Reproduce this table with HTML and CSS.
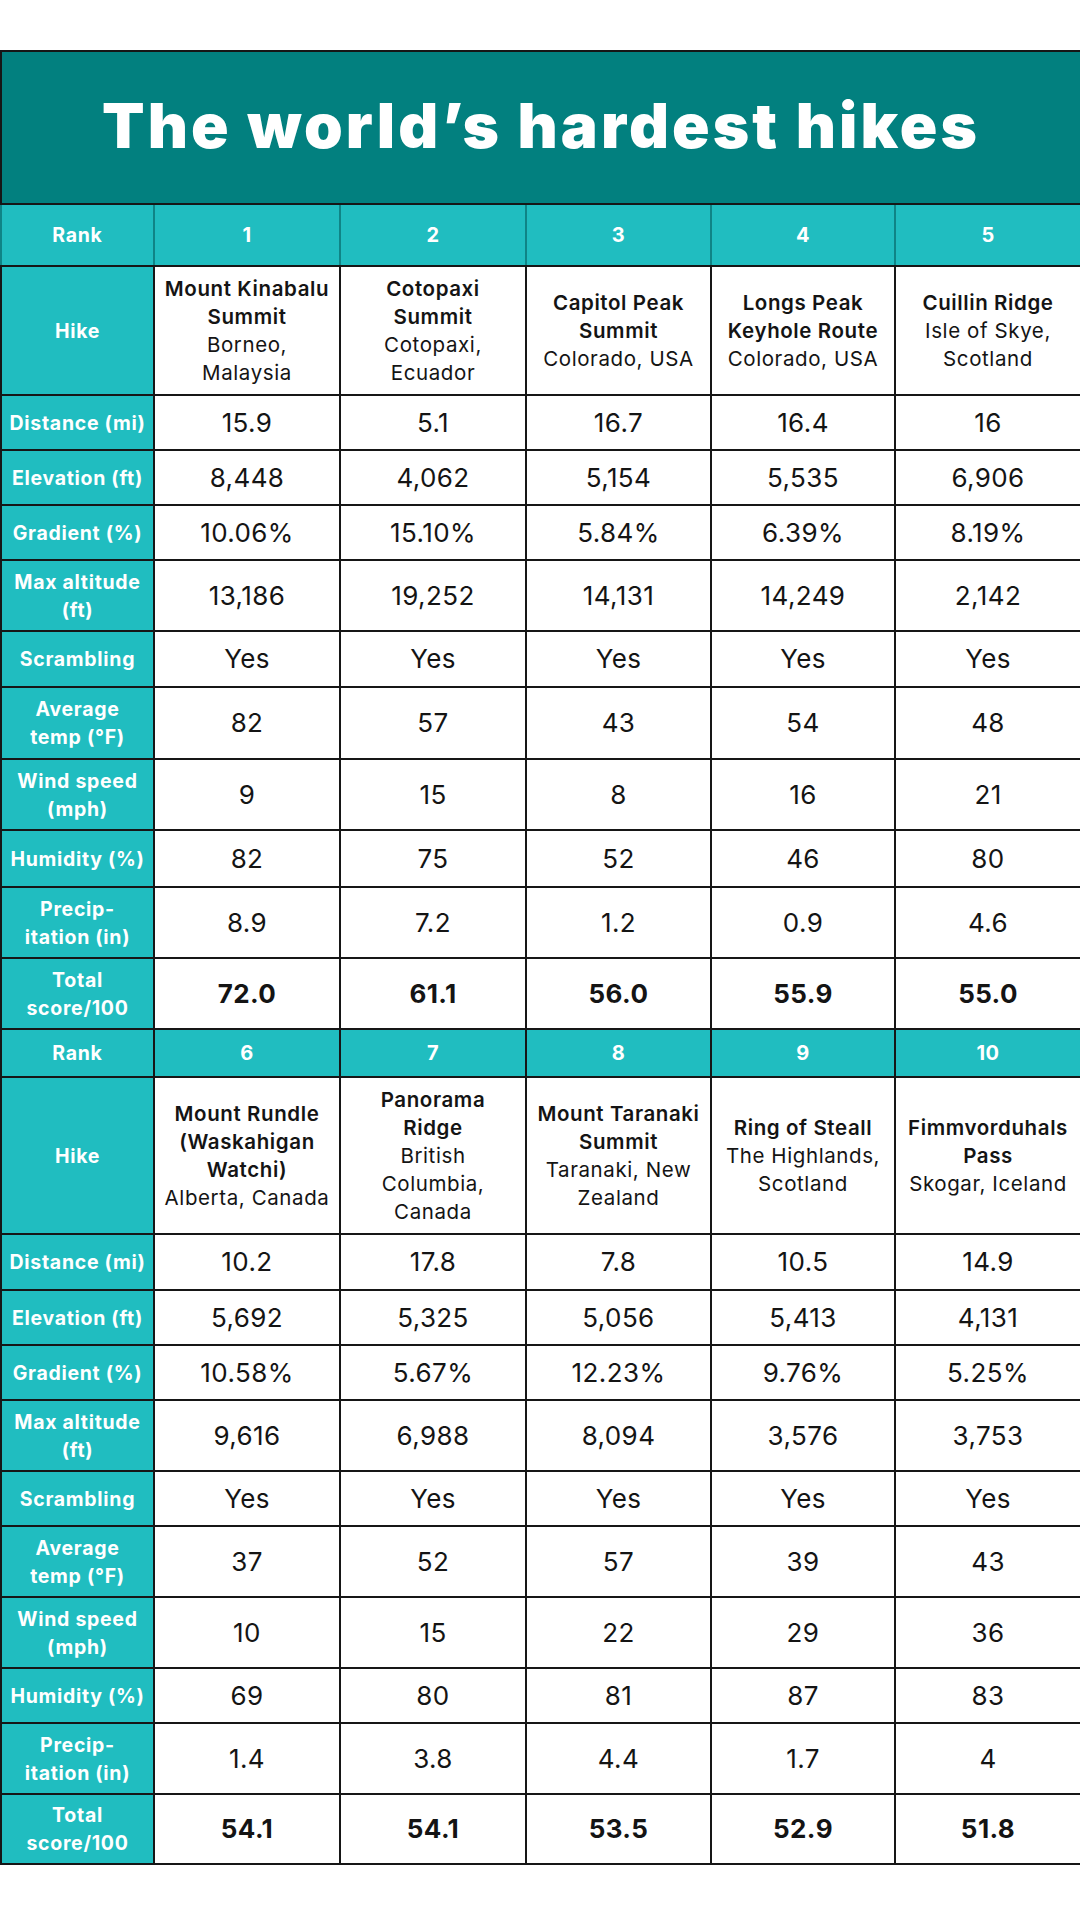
FILE: index.html
```html
<!DOCTYPE html>
<html lang="en">
<head>
<meta charset="utf-8">
<title>The world’s hardest hikes</title>
<link rel="stylesheet" href="styles.css">
</head>
<body>
<table class="hikes">
  <colgroup>
    <col class="c-label"><col class="c-a"><col class="c-a"><col class="c-b"><col class="c-c"><col class="c-d">
  </colgroup>
  <tr class="r-title"><th colspan="6" class="title">The world’s hardest hikes</th></tr>

  <tr class="r-rank1 rank rank-top"><th>Rank</th><td>1</td><td>2</td><td>3</td><td>4</td><td>5</td></tr>
  <tr class="r-hike1 hike"><th>Hike</th>
    <td><b>Mount Kinabalu<br>Summit</b><br>Borneo,<br>Malaysia</td>
    <td><b>Cotopaxi<br>Summit</b><br>Cotopaxi,<br>Ecuador</td>
    <td><b>Capitol Peak<br>Summit</b><br>Colorado, USA</td>
    <td><b>Longs Peak<br>Keyhole Route</b><br>Colorado, USA</td>
    <td><b>Cuillin Ridge</b><br>Isle of Skye,<br>Scotland</td>
  </tr>
  <tr class="s"><th>Distance (mi)</th><td>15.9</td><td>5.1</td><td>16.7</td><td>16.4</td><td>16</td></tr>
  <tr class="s"><th>Elevation (ft)</th><td>8,448</td><td>4,062</td><td>5,154</td><td>5,535</td><td>6,906</td></tr>
  <tr class="s"><th>Gradient (%)</th><td>10.06%</td><td>15.10%</td><td>5.84%</td><td>6.39%</td><td>8.19%</td></tr>
  <tr class="d"><th>Max altitude<br>(ft)</th><td>13,186</td><td>19,252</td><td>14,131</td><td>14,249</td><td>2,142</td></tr>
  <tr class="s56"><th>Scrambling</th><td>Yes</td><td>Yes</td><td>Yes</td><td>Yes</td><td>Yes</td></tr>
  <tr class="d72"><th>Average<br>temp (°F)</th><td>82</td><td>57</td><td>43</td><td>54</td><td>48</td></tr>
  <tr class="d"><th>Wind speed<br>(mph)</th><td>9</td><td>15</td><td>8</td><td>16</td><td>21</td></tr>
  <tr class="s57"><th>Humidity (%)</th><td>82</td><td>75</td><td>52</td><td>46</td><td>80</td></tr>
  <tr class="d"><th>Precip-<br>itation (in)</th><td>8.9</td><td>7.2</td><td>1.2</td><td>0.9</td><td>4.6</td></tr>
  <tr class="d total"><th>Total<br>score/100</th><td>72.0</td><td>61.1</td><td>56.0</td><td>55.9</td><td>55.0</td></tr>

  <tr class="r-rank2 rank"><th>Rank</th><td>6</td><td>7</td><td>8</td><td>9</td><td>10</td></tr>
  <tr class="r-hike2 hike"><th>Hike</th>
    <td><b>Mount Rundle<br>(Waskahigan<br>Watchi)</b><br>Alberta, Canada</td>
    <td><b>Panorama<br>Ridge</b><br>British<br>Columbia,<br>Canada</td>
    <td><b>Mount Taranaki<br>Summit</b><br>Taranaki, New<br>Zealand</td>
    <td><b>Ring of Steall</b><br>The Highlands,<br>Scotland</td>
    <td><b>Fimmvorduhals<br>Pass</b><br>Skogar, Iceland</td>
  </tr>
  <tr class="s56"><th>Distance (mi)</th><td>10.2</td><td>17.8</td><td>7.8</td><td>10.5</td><td>14.9</td></tr>
  <tr class="s"><th>Elevation (ft)</th><td>5,692</td><td>5,325</td><td>5,056</td><td>5,413</td><td>4,131</td></tr>
  <tr class="s"><th>Gradient (%)</th><td>10.58%</td><td>5.67%</td><td>12.23%</td><td>9.76%</td><td>5.25%</td></tr>
  <tr class="d"><th>Max altitude<br>(ft)</th><td>9,616</td><td>6,988</td><td>8,094</td><td>3,576</td><td>3,753</td></tr>
  <tr class="s"><th>Scrambling</th><td>Yes</td><td>Yes</td><td>Yes</td><td>Yes</td><td>Yes</td></tr>
  <tr class="d"><th>Average<br>temp (°F)</th><td>37</td><td>52</td><td>57</td><td>39</td><td>43</td></tr>
  <tr class="d"><th>Wind speed<br>(mph)</th><td>10</td><td>15</td><td>22</td><td>29</td><td>36</td></tr>
  <tr class="s"><th>Humidity (%)</th><td>69</td><td>80</td><td>81</td><td>87</td><td>83</td></tr>
  <tr class="d"><th>Precip-<br>itation (in)</th><td>1.4</td><td>3.8</td><td>4.4</td><td>1.7</td><td>4</td></tr>
  <tr class="d70 total"><th>Total<br>score/100</th><td>54.1</td><td>54.1</td><td>53.5</td><td>52.9</td><td>51.8</td></tr>
</table>
</body>
</html>
```

FILE: styles.css
```css
html, body {
  margin: 0;
  padding: 0;
  background: #ffffff;
}

body {
  padding-top: 50px;
  font-family: Inter, "Open Sans", "Liberation Sans", sans-serif;
}

.hikes {
  width: 1080px;
  border-collapse: collapse;
  table-layout: fixed;
}

.c-label { width: 153px; }
.c-a { width: 186px; }
.c-b { width: 185px; }
.c-c { width: 184px; }
.c-d { width: 186px; }

.hikes th,
.hikes td {
  border: 2px solid #161616;
  padding: 0 2px;
  text-align: center;
  vertical-align: middle;
}

.hikes th {
  background: #20bdc0;
  color: #ffffff;
  font-weight: 700;
  font-size: 19.5px;
  line-height: 28px;
  letter-spacing: 0.7px;
}

.hikes td {
  color: #141414;
  font-size: 26px;
  font-weight: 400;
  line-height: 30px;
  letter-spacing: 0.4px;
}

.hikes th.title {
  background: #02807f;
  font-size: 62px;
  font-weight: 900;
  letter-spacing: 3.1px;
  line-height: 70px;
  padding-top: 0;
  padding-bottom: 4px;
}

.r-title { height: 153px; }
.r-rank1 { height: 62px; }
.r-rank2 { height: 48px; }
.r-hike1 { height: 129px; }
.r-hike2 { height: 157px; }
.s { height: 55px; }
.s56 { height: 56px; }
.s57 { height: 57px; }
.d { height: 71px; }
.d70 { height: 70px; }
.d72 { height: 72px; }

.rank td {
  background: #20bdc0;
  color: #ffffff;
  font-weight: 700;
  font-size: 20px;
}

.rank-top th,
.rank-top td {
  border-left-color: #0f8486;
  border-right-color: #0f8486;
}

.hike td {
  font-size: 20.5px;
  line-height: 28px;
  letter-spacing: 0.6px;
}

.hike td b {
  font-weight: 600;
}

.total td {
  font-weight: 700;
}
```
